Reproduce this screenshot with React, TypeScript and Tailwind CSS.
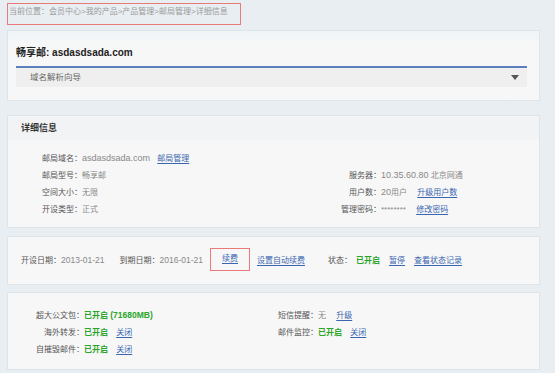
const font = { fontFamily: '"Liberation Sans", "Noto Sans CJK SC", sans-serif' }

function Link({ children }: { children: React.ReactNode }) {
	return <a className="text-[#3a66b0] underline underline-offset-2 cursor-pointer">{children}</a>
}

function On() {
	return <span className="font-bold text-[#2aa52a]">已开启</span>
}

export default function App() {
	return (
		<div className="w-[555px] h-[373px] overflow-hidden bg-[#e9eef2] text-[8px] text-[#555] whitespace-nowrap" style={font}>
			{/* breadcrumb */}
			<div className="ml-[7px] mt-[3px] w-[234px] h-[22px] border border-[#e87a7a] pl-[1px] pt-[2px] text-[8px] text-[#9a9a9a]">
				当前位置：会员中心&gt;我的产品&gt;产品管理&gt;邮局管理&gt;详细信息
			</div>

			{/* product */}
			<div className="ml-[7px] mt-[5px] w-[533px] h-[71px] border border-[#dde4ea] bg-gradient-to-b from-[#eef4f8] to-[#f7f7f7] to-[20%] px-[8px] pt-[15px]">
				<div className="text-[10px] font-bold text-[#222] leading-[13px]">畅享邮: asdasdsada.com</div>
				<div className="mt-[7px] mr-[4px] border-t-2 border-[#5b7fbd]"></div>
				<div className="mr-[4px] h-[19px] bg-[#efefef] flex items-center justify-between pl-[14px] pr-[8px]">
					<span className="text-[#666] text-[8.5px]">域名解析向导</span>
					<svg width="8" height="5" viewBox="0 0 8 5"><path d="M0 0h8L4 5z" fill="#555" /></svg>
				</div>
			</div>

			{/* detail */}
			<div className="ml-[7px] mt-[14px] w-[533px] h-[113px] border border-[#dde4ea] bg-[#f7f7f7]">
				<div className="h-[24px] bg-[#f2f3f4] pl-[13px] pt-[6px] font-bold text-[9px] text-[#333]">详细信息</div>
				<div className="mt-[12px] flex flex-col gap-[4px] leading-[13px]">
					<div className="flex">
						<div className="w-[74px] text-right text-[#555]">邮局域名：</div>
						<div className="w-[219px] text-[#888]"><span className="text-[9px]">asdasdsada.com</span> <span className="ml-[5px]"><Link>邮局管理</Link></span></div>
					</div>
					<div className="flex">
						<div className="w-[74px] text-right">邮局型号：</div>
						<div className="w-[219px] text-[#888]">畅享邮</div>
						<div className="w-[80px] text-right">服务器：</div>
						<div className="text-[#888]"><span className="text-[9px]">10.35.60.80</span> 北京网通</div>
					</div>
					<div className="flex">
						<div className="w-[74px] text-right">空间大小：</div>
						<div className="w-[219px] text-[#888]">无限</div>
						<div className="w-[80px] text-right">用户数：</div>
						<div className="text-[#888]"><span className="text-[9px]">20</span>用户 <span className="ml-[8px]"><Link>升级用户数</Link></span></div>
					</div>
					<div className="flex">
						<div className="w-[74px] text-right">开设类型：</div>
						<div className="w-[219px] text-[#888]">正式</div>
						<div className="w-[80px] text-right">管理密码：</div>
						<div className="text-[#888]">******** <span className="ml-[8px]"><Link>修改密码</Link></span></div>
					</div>
				</div>
			</div>

			{/* dates */}
			<div className="ml-[7px] mt-[8px] w-[533px] h-[49px] border border-[#dde4ea] bg-[#f7f7f7] flex items-center pl-[13px]">
				<span>开设日期：<span className="text-[#888] text-[8.5px]">2013-01-21</span></span>
				<span className="ml-[15px]">到期日期：<span className="text-[#888] text-[8.5px]">2016-01-21</span></span>
				<span className="ml-[7px] mt-[11px] w-[40px] h-[23px] border border-[#e87a7a] flex justify-center pt-[4px] self-start">
					<Link>续费</Link>
				</span>
				<span className="ml-[7px]"><Link>设置自动续费</Link></span>
				<span className="ml-[23px]">状态：</span>
				<span className="ml-[4px]"><On /></span>
				<span className="ml-[9px]"><Link>暂停</Link></span>
				<span className="ml-[9px]"><Link>查看状态记录</Link></span>
			</div>

			{/* features */}
			<div className="ml-[7px] mt-[7px] w-[533px] h-[78px] border border-[#dde4ea] bg-[#f7f7f7] pt-[16px] flex flex-col gap-[4px] leading-[13px]">
				<div className="flex">
					<div className="w-[76px] text-right">超大公文包：</div>
					<div className="w-[159px]"><On /> <span className="font-bold text-[#2aa52a] text-[8.5px]">(71680MB)</span></div>
					<div className="w-[75px] text-right">短信提醒：</div>
					<div className="text-[#888]">无 <span className="ml-[8px]"><Link>升级</Link></span></div>
				</div>
				<div className="flex">
					<div className="w-[76px] text-right">海外转发：</div>
					<div className="w-[159px]"><On /> <span className="ml-[6px]"><Link>关闭</Link></span></div>
					<div className="w-[75px] text-right">邮件监控：</div>
					<div><On /> <span className="ml-[6px]"><Link>关闭</Link></span></div>
				</div>
				<div className="flex">
					<div className="w-[76px] text-right">自摧毁邮件：</div>
					<div className="w-[159px]"><On /> <span className="ml-[6px]"><Link>关闭</Link></span></div>
				</div>
			</div>
		</div>
	)
}
